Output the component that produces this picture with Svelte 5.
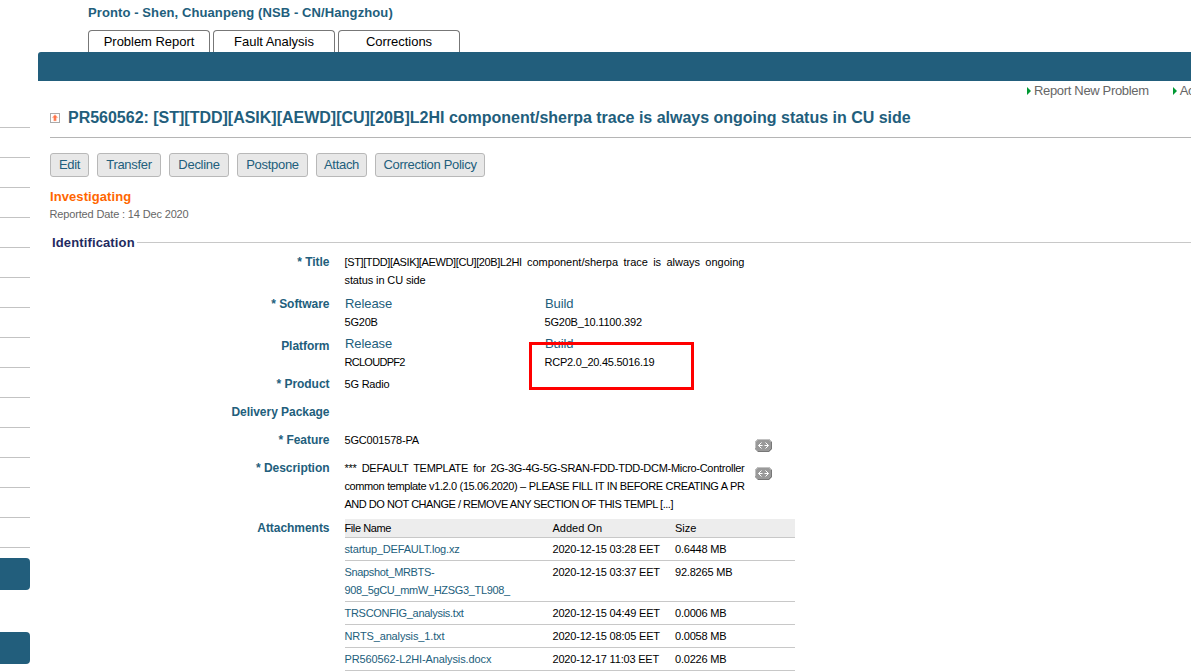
<script>
  const tabs = ['Problem Report', 'Fault Analysis', 'Corrections'];
  const actions = [
    { text: 'Edit', width: 39 },
    { text: 'Transfer', width: 64 },
    { text: 'Decline', width: 60 },
    { text: 'Postpone', width: 71 },
    { text: 'Attach', width: 51 },
    { text: 'Correction Policy', width: 110 }
  ];
  const files = [
    { name: ['startup_DEFAULT.log.xz'], spacing: -0.18, added: '2020-12-15 03:28 EET', size: '0.6448 MB' },
    { name: ['Snapshot_MRBTS-', '908_5gCU_mmW_HZSG3_TL908_'], spacing: -0.33, added: '2020-12-15 03:37 EET', size: '92.8265 MB' },
    { name: ['TRSCONFIG_analysis.txt'], spacing: -0.28, added: '2020-12-15 04:49 EET', size: '0.0006 MB' },
    { name: ['NRTS_analysis_1.txt'], spacing: -0.14, added: '2020-12-15 08:05 EET', size: '0.0058 MB' },
    { name: ['PR560562-L2HI-Analysis.docx'], spacing: -0.11, added: '2020-12-17 11:03 EET', size: '0.0226 MB' }
  ];
</script>

{#snippet expand()}
  <svg class="expand" width="17" height="13" viewBox="0 0 17 13">
    <path d="M3 0H14L17 3V10L14 13H3L0 10V3Z" fill="#777" />
    <path d="M3 0H14L16 2V9L13 12H3L0 9V3Z" fill="#c2c2c2" />
    <path d="M3 1H14L16 3V9L13 12H3L1 10V3Z" fill="#999" />
    <path d="M6.5 3.5L3.5 6.5L6.5 9.5M3.5 6.5H7.5M10.5 3.5L13.5 6.5L10.5 9.5M13.5 6.5H9.5" fill="none" stroke="#fff" />
  </svg>
{/snippet}

<div class="page">
  <aside>
    <div class="lines">
      {#each Array(15) as _}<div class="line"></div>{/each}
    </div>
    <div class="block"></div>
    <div class="block second"></div>
  </aside>

  <main>
    <header><span class="user">Pronto - Shen, Chuanpeng (NSB - CN/Hangzhou)</span></header>
    <nav>
      {#each tabs as tab}<span class="tab">{tab}</span>{/each}
    </nav>
    <div class="bar"></div>
    <div class="links">
      <span class="link"><i></i>Report New Problem</span>
      <span class="link"><i></i>Ac</span>
    </div>

    <div class="heading">
      <svg width="10" height="10" viewBox="0 0 10 10">
        <rect x=".5" y=".5" width="9" height="9" fill="#fff" stroke="#aaa" />
        <path d="M5 1.5L8 4.7H6.3V8H3.7V4.7H2Z" fill="#ff7246" stroke="#ffd2c2" stroke-width=".5" />
      </svg>
      <h1>PR560562: [ST][TDD][ASIK][AEWD][CU][20B]L2HI component/sherpa trace is always ongoing status in CU side</h1>
    </div>

    <div class="actions">
      {#each actions as a}<button style:width="{a.width}px">{a.text}</button>{/each}
    </div>
    <div class="status">Investigating</div>
    <div class="date">Reported Date : 14 Dec 2020</div>
    <div class="section"><h2>Identification</h2><hr /></div>

    <div class="form">
      <div class="label">* Title</div>
      <div class="value title">
        <div class="justify"><span class="tags">[ST][TDD][ASIK][AEWD][CU][20B]L2HI</span> component/sherpa trace is always ongoing</div>
        <div class="t2">status in CU side</div>
      </div>

      <div class="label">* Software</div>
      <div class="value pair">
        <div><div class="sub">Release</div><div>5G20B</div></div>
        <div><div class="sub">Build</div><div>5G20B_10.1100.392</div></div>
      </div>

      <div class="label low">Platform</div>
      <div class="value pair">
        <div><div class="sub">Release</div><div class="cloud">RCLOUDPF2</div></div>
        <div><div class="sub">Build</div><div class="rcp">RCP2.0_20.45.5016.19</div><div class="mark"></div></div>
      </div>

      <div class="label">* Product</div>
      <div class="value single">5G Radio</div>
      <div class="label">Delivery Package</div>
      <div class="value single"></div>
      <div class="label">* Feature</div>
      <div class="value single wide"><span>5GC001578-PA</span>{@render expand()}</div>
      <div class="label">* Description</div>
      <div class="value desc wide">
        <div class="text">
          <div class="justify d1">*** DEFAULT TEMPLATE for 2G-3G-4G-5G-SRAN-FDD-TDD-DCM-Micro-Controller</div>
          <div class="justify d2">common template v1.2.0 (15.06.2020) – PLEASE FILL IT IN BEFORE CREATING A PR</div>
          <div class="d3">AND DO NOT CHANGE / REMOVE ANY SECTION OF THIS TEMPL [...]</div>
        </div>
        {@render expand()}
      </div>
      <div class="label">Attachments</div>
      <div class="value files">
        <div class="file head"><span class="fn">File Name</span><span class="ao">Added On</span><span class="ao">Size</span></div>
        {#each files as f}
          <div class="file">
            <div class="name" style:letter-spacing="{f.spacing}px">{#each f.name as part}<span>{part}</span>{/each}</div>
            <span>{f.added}</span><span>{f.size}</span>
          </div>
        {/each}
      </div>
    </div>
  </main>
</div>

<style>
  :global(body) { background: #fff; overflow: hidden; }
  .page {
    width: 1191px; height: 672px; overflow: hidden; display: flex; gap: 8px;
    font: 11px/18px "Liberation Sans", Arial, sans-serif; color: #000;
  }
  .page * { box-sizing: border-box; white-space: nowrap; }
  aside { width: 30px; flex: none; padding-top: 98px; }
  .line { height: 30px; border-bottom: 1px solid #c3c3c3; }
  .block { height: 32px; margin-top: 10px; background: #225e7c; border-radius: 0 4px 4px 0; }
  .second { margin-top: 42px; }
  main { width: 1153px; flex: none; }
  header { height: 30px; padding: 4px 0 0 50px; }
  .user { font-weight: bold; font-size: 13px; letter-spacing: .1px; color: #225e7c; }
  nav { display: flex; gap: 3px; padding-left: 50px; height: 22px; }
  .tab {
    width: 122px; border: 1px solid #777; border-bottom: 0; border-radius: 4px 4px 0 0;
    text-align: center; font-size: 13px; line-height: 21px; letter-spacing: -.03px;
  }
  .bar { height: 29px; background: #225e7c; border-top-left-radius: 3px; }
  .links { height: 20px; display: flex; align-items: flex-start; gap: 24px; padding-left: 989px; overflow: hidden; }
  .link { flex: none; font-size: 13px; line-height: 19px; letter-spacing: -.33px; color: #666; display: flex; align-items: center; gap: 3px; }
  .link i { border-left: 4px solid #009933; border-top: 4px solid transparent; border-bottom: 4px solid transparent; }
  .heading { height: 37px; margin-left: 12px; border-bottom: 1px solid #b5b5b5; display: flex; align-items: center; gap: 8px; padding-bottom: 3px; }
  h1 { margin: 0; font-size: 16px; line-height: 20px; letter-spacing: -.01px; color: #225e7c; }
  .heading svg { margin-top: 1px; }
  .actions { display: flex; gap: 8px; padding: 15px 0 0 12px; height: 50px; }
  button {
    flex: none; height: 24px; padding: 0; background: #e8e8e8; border: 1px solid #b8b8b8; border-radius: 3px;
    font: 13px/20px "Liberation Sans", Arial, sans-serif; letter-spacing: -.3px; color: #225e7c;
  }
  .status { padding-left: 12px; font-size: 13px; font-weight: bold; letter-spacing: .08px; color: #ff6600; }
  .date { margin-top: -1px; padding-left: 11.5px; height: 27px; letter-spacing: -.15px; color: #666; }
  .section { display: flex; align-items: center; height: 21px; padding-left: 14px; padding-bottom: 1px; gap: 2px; }
  h2 { margin: 0; padding-top: 2px; font-size: 13px; letter-spacing: .13px; color: #1f2a60; }
  hr { flex: 1; margin: 0; border: 0; border-top: 1px solid #c8c8c8; }
  .form { display: grid; grid-template-columns: 291.5px 451px; column-gap: 15px; }
  .label { text-align: right; font-size: 12px; font-weight: bold; letter-spacing: -.04px; color: #225e7c; }
  .low { padding-top: 2px; }
  .value { letter-spacing: -.2px; }
  .title { height: 42px; width: 400px; letter-spacing: 0; }
  .tags { letter-spacing: -.38px; }
  .t2 { letter-spacing: -.12px; }
  .justify { width: 400px; text-align: justify; text-align-last: justify; white-space: normal !important; height: 18px; }
  .pair { display: grid; grid-template-columns: 200px 200px; height: 40px; }
  .pair > div { position: relative; }
  .sub { padding-left: .5px; font-size: 13px; letter-spacing: -.08px; color: #225e7c; }
  .cloud { letter-spacing: -.72px; }
  .rcp { letter-spacing: -.25px; }
  .mark { position: absolute; left: -15.5px; top: 7px; width: 165px; height: 48px; border: 3px solid #f00; }
  .single { height: 28px; }
  .wide { display: flex; justify-content: space-between; padding-right: 23.5px; }
  .expand { margin-top: 8px; flex: none; }
  .desc { height: 60px; }
  .d1 { letter-spacing: -.29px; }
  .d2 { letter-spacing: -.4px; }
  .d3 { letter-spacing: -.48px; }
  .files { width: 450px; margin-left: .5px; }
  .file { display: grid; grid-template-columns: 208px 122.5px 119.5px; padding: 2px 0; border-bottom: 1px solid #c8c8c8; }
  .file > * { margin-left: -.5px; }
  .head { background: #ededed; padding: 0; }
  .fn { letter-spacing: -.4px; }
  .ao { letter-spacing: 0; }
  .name { display: flex; flex-direction: column; color: #225e7c; }
</style>
